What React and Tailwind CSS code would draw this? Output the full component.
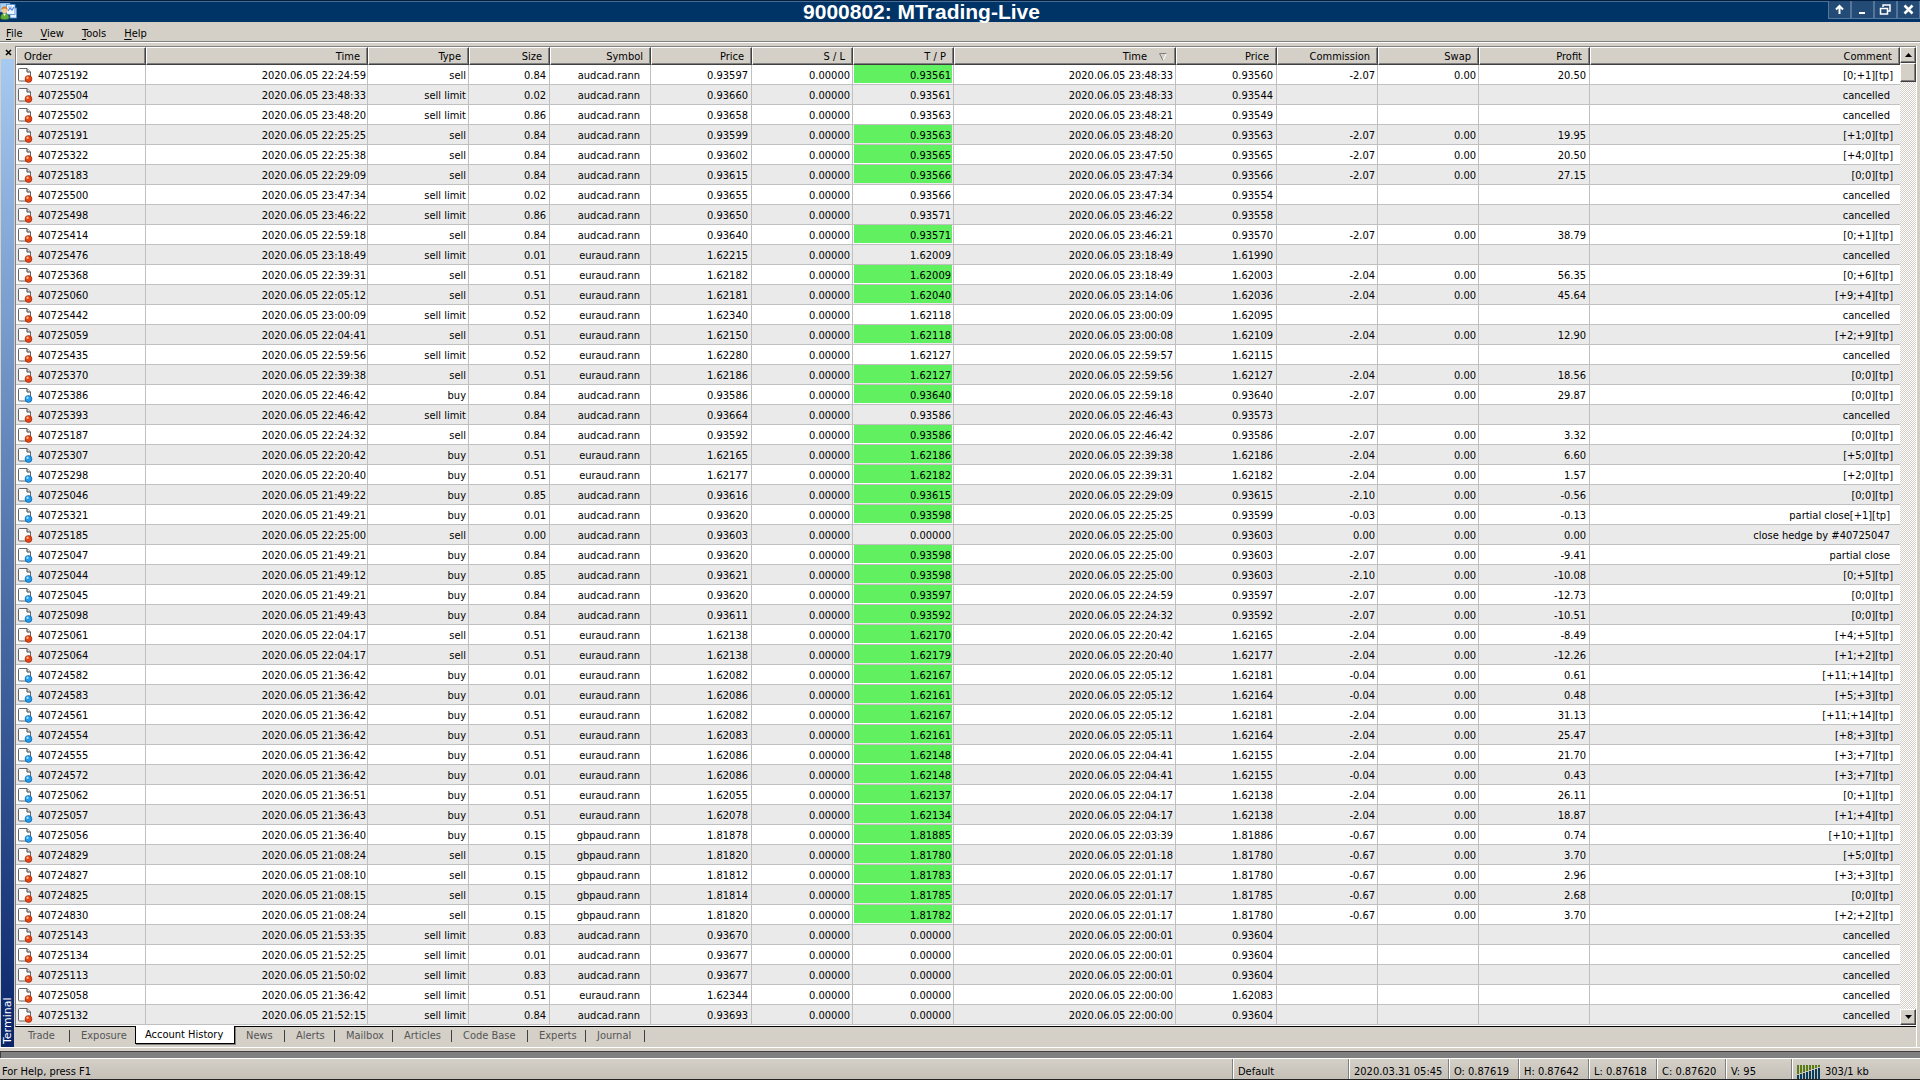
import { useState } from 'react';

const DAY = '2020.06.05';

// ticket | open time | type | size | symbol | price | t/p | close time | price | commission | swap | profit | comment
const HISTORY = `
40725192|22:24:59|sell|0.84|audcad|0.93597|0.93561|23:48:33|0.93560|-2.07|0.00|20.50|[0;+1][tp]
40725504|23:48:33|sell limit|0.02|audcad|0.93660|0.93561|23:48:33|0.93544||||cancelled
40725502|23:48:20|sell limit|0.86|audcad|0.93658|0.93563|23:48:21|0.93549||||cancelled
40725191|22:25:25|sell|0.84|audcad|0.93599|0.93563|23:48:20|0.93563|-2.07|0.00|19.95|[+1;0][tp]
40725322|22:25:38|sell|0.84|audcad|0.93602|0.93565|23:47:50|0.93565|-2.07|0.00|20.50|[+4;0][tp]
40725183|22:29:09|sell|0.84|audcad|0.93615|0.93566|23:47:34|0.93566|-2.07|0.00|27.15|[0;0][tp]
40725500|23:47:34|sell limit|0.02|audcad|0.93655|0.93566|23:47:34|0.93554||||cancelled
40725498|23:46:22|sell limit|0.86|audcad|0.93650|0.93571|23:46:22|0.93558||||cancelled
40725414|22:59:18|sell|0.84|audcad|0.93640|0.93571|23:46:21|0.93570|-2.07|0.00|38.79|[0;+1][tp]
40725476|23:18:49|sell limit|0.01|euraud|1.62215|1.62009|23:18:49|1.61990||||cancelled
40725368|22:39:31|sell|0.51|euraud|1.62182|1.62009|23:18:49|1.62003|-2.04|0.00|56.35|[0;+6][tp]
40725060|22:05:12|sell|0.51|euraud|1.62181|1.62040|23:14:06|1.62036|-2.04|0.00|45.64|[+9;+4][tp]
40725442|23:00:09|sell limit|0.52|euraud|1.62340|1.62118|23:00:09|1.62095||||cancelled
40725059|22:04:41|sell|0.51|euraud|1.62150|1.62118|23:00:08|1.62109|-2.04|0.00|12.90|[+2;+9][tp]
40725435|22:59:56|sell limit|0.52|euraud|1.62280|1.62127|22:59:57|1.62115||||cancelled
40725370|22:39:38|sell|0.51|euraud|1.62186|1.62127|22:59:56|1.62127|-2.04|0.00|18.56|[0;0][tp]
40725386|22:46:42|buy|0.84|audcad|0.93586|0.93640|22:59:18|0.93640|-2.07|0.00|29.87|[0;0][tp]
40725393|22:46:42|sell limit|0.84|audcad|0.93664|0.93586|22:46:43|0.93573||||cancelled
40725187|22:24:32|sell|0.84|audcad|0.93592|0.93586|22:46:42|0.93586|-2.07|0.00|3.32|[0;0][tp]
40725307|22:20:42|buy|0.51|euraud|1.62165|1.62186|22:39:38|1.62186|-2.04|0.00|6.60|[+5;0][tp]
40725298|22:20:40|buy|0.51|euraud|1.62177|1.62182|22:39:31|1.62182|-2.04|0.00|1.57|[+2;0][tp]
40725046|21:49:22|buy|0.85|audcad|0.93616|0.93615|22:29:09|0.93615|-2.10|0.00|-0.56|[0;0][tp]
40725321|21:49:21|buy|0.01|audcad|0.93620|0.93598|22:25:25|0.93599|-0.03|0.00|-0.13|partial close[+1][tp]
40725185|22:25:00|sell|0.00|audcad|0.93603|0.00000|22:25:00|0.93603|0.00|0.00|0.00|close hedge by #40725047
40725047|21:49:21|buy|0.84|audcad|0.93620|0.93598|22:25:00|0.93603|-2.07|0.00|-9.41|partial close
40725044|21:49:12|buy|0.85|audcad|0.93621|0.93598|22:25:00|0.93603|-2.10|0.00|-10.08|[0;+5][tp]
40725045|21:49:21|buy|0.84|audcad|0.93620|0.93597|22:24:59|0.93597|-2.07|0.00|-12.73|[0;0][tp]
40725098|21:49:43|buy|0.84|audcad|0.93611|0.93592|22:24:32|0.93592|-2.07|0.00|-10.51|[0;0][tp]
40725061|22:04:17|sell|0.51|euraud|1.62138|1.62170|22:20:42|1.62165|-2.04|0.00|-8.49|[+4;+5][tp]
40725064|22:04:17|sell|0.51|euraud|1.62138|1.62179|22:20:40|1.62177|-2.04|0.00|-12.26|[+1;+2][tp]
40724582|21:36:42|buy|0.01|euraud|1.62082|1.62167|22:05:12|1.62181|-0.04|0.00|0.61|[+11;+14][tp]
40724583|21:36:42|buy|0.01|euraud|1.62086|1.62161|22:05:12|1.62164|-0.04|0.00|0.48|[+5;+3][tp]
40724561|21:36:42|buy|0.51|euraud|1.62082|1.62167|22:05:12|1.62181|-2.04|0.00|31.13|[+11;+14][tp]
40724554|21:36:42|buy|0.51|euraud|1.62083|1.62161|22:05:11|1.62164|-2.04|0.00|25.47|[+8;+3][tp]
40724555|21:36:42|buy|0.51|euraud|1.62086|1.62148|22:04:41|1.62155|-2.04|0.00|21.70|[+3;+7][tp]
40724572|21:36:42|buy|0.01|euraud|1.62086|1.62148|22:04:41|1.62155|-0.04|0.00|0.43|[+3;+7][tp]
40725062|21:36:51|buy|0.51|euraud|1.62055|1.62137|22:04:17|1.62138|-2.04|0.00|26.11|[0;+1][tp]
40725057|21:36:43|buy|0.51|euraud|1.62078|1.62134|22:04:17|1.62138|-2.04|0.00|18.87|[+1;+4][tp]
40725056|21:36:40|buy|0.15|gbpaud|1.81878|1.81885|22:03:39|1.81886|-0.67|0.00|0.74|[+10;+1][tp]
40724829|21:08:24|sell|0.15|gbpaud|1.81820|1.81780|22:01:18|1.81780|-0.67|0.00|3.70|[+5;0][tp]
40724827|21:08:10|sell|0.15|gbpaud|1.81812|1.81783|22:01:17|1.81780|-0.67|0.00|2.96|[+3;+3][tp]
40724825|21:08:15|sell|0.15|gbpaud|1.81814|1.81785|22:01:17|1.81785|-0.67|0.00|2.68|[0;0][tp]
40724830|21:08:24|sell|0.15|gbpaud|1.81820|1.81782|22:01:17|1.81780|-0.67|0.00|3.70|[+2;+2][tp]
40725143|21:53:35|sell limit|0.83|audcad|0.93670|0.00000|22:00:01|0.93604||||cancelled
40725134|21:52:25|sell limit|0.01|audcad|0.93677|0.00000|22:00:01|0.93604||||cancelled
40725113|21:50:02|sell limit|0.83|audcad|0.93677|0.00000|22:00:01|0.93604||||cancelled
40725058|21:36:42|sell limit|0.51|euraud|1.62344|0.00000|22:00:00|1.62083||||cancelled
40725132|21:52:15|sell limit|0.84|audcad|0.93693|0.00000|22:00:00|0.93604||||cancelled
`;

const orders = HISTORY.trim().split('\n').map((line) => {
  const [ticket, openTime, type, size, pair, price, tp, closeTime, closePrice, commission, swap, profit, comment] =
    line.split('|');
  return { ticket, openTime, type, size, symbol: `${pair}.rann`, price, tp, closeTime, closePrice, commission, swap, profit, comment };
});

const columns = [
  { label: 'Order', width: 'w-[130px]' },
  { label: 'Time', width: 'w-[222px]' },
  { label: 'Type', width: 'w-[101px]' },
  { label: 'Size', width: 'w-[81px]' },
  { label: 'Symbol', width: 'w-[101px]' },
  { label: 'Price', width: 'w-[101px]' },
  { label: 'S / L', width: 'w-[101px]' },
  { label: 'T / P', width: 'w-[101px]' },
  { label: 'Time', width: 'w-[222px]', sorted: true },
  { label: 'Price', width: 'w-[101px]' },
  { label: 'Commission', width: 'w-[101px]' },
  { label: 'Swap', width: 'w-[101px]' },
  { label: 'Profit', width: 'w-[111px]' },
  { label: 'Comment', width: '' },
];

const tabs = [
  { name: 'Trade', width: 'w-[53px]' },
  { name: 'Exposure', width: 'w-[65px]' },
  { name: 'Account History', width: 'w-[100px]' },
  { name: 'News', width: 'w-[50px]' },
  { name: 'Alerts', width: 'w-[50px]' },
  { name: 'Mailbox', width: 'w-[58px]' },
  { name: 'Articles', width: 'w-[59px]' },
  { name: 'Code Base', width: 'w-[76px]' },
  { name: 'Experts', width: 'w-[58px]' },
  { name: 'Journal', width: 'w-[59px]' },
];

const AppIcon = () => (
  <svg width="17" height="17" viewBox="0 0 17 17" className="block">
    <rect x="0" y="0" width="10" height="9" fill="#a9cdf0" stroke="#5b93cf" strokeWidth="0.6" />
    <rect x="10" y="5" width="6.5" height="10" fill="#e4f1fd" stroke="#4d8ccc" strokeWidth="0.8" />
    <rect x="6.5" y="1.5" width="8.5" height="10" fill="#e9f4ff" stroke="#4d8ccc" strokeWidth="0.8" />
    <path d="M8 8l2-3 2 2 2-3" fill="none" stroke="#5a86e0" strokeWidth="1.2" />
    <path d="M8 4h4" stroke="#8fb5ea" />
    <path d="M0.5 15.5c0-4 1.5-5 4-5s4.5 1 4.5 5c-2 1.3-6.5 1.3-8.5 0z" fill="#63ad3a" stroke="#3d7e24" strokeWidth="0.6" />
    <path d="M3 10.5l1.5 2.5 1.5-2.5z" fill="#fff" />
    <circle cx="4.5" cy="7.5" r="2.8" fill="#f6c896" />
    <path d="M1.5 7.5c-.3-3 1.2-4 3-4s3.4 1 3 4c-.8-1.5-1.5-2-3-2s-2.3.6-3 2z" fill="#cf7a26" />
  </svg>
);

const OrderIcon = ({ buy }) => (
  <svg width="15" height="16" viewBox="0 0 15 16" className="block shrink-0">
    <path d="M1.5 1.5h7.5l3.5 3.5v9h-11a1 1 0 0 1-1-1v-10.500a1 1 0 0 1 1-1z" fill="#fbfbfb" stroke="#666" />
    <path d="M9 1.5v3.5h3.5" fill="#ddd" stroke="#444" />
    <circle cx="10.500" cy="12" r="3.4" fill={buy ? '#1f9df0' : '#ea4410'} stroke={buy ? '#0c62a8' : '#9c2b08'} strokeWidth="0.8" />
    <circle cx="9.500" cy="10.8" r="1.2" fill={buy ? '#9adcff' : '#ffb08c'} />
  </svg>
);

const TitleButton = ({ label, children }) => (
  <button
    aria-label={label}
    className="flex h-[18px] w-[23px] items-center justify-center border border-t-0 border-[#53779c] bg-[#234b76]"
  >
    <svg width="13" height="13" viewBox="0 0 13 13" fill="none" stroke="#fff" strokeWidth="2">
      {children}
    </svg>
  </button>
);

const ScrollButton = ({ label, path }) => (
  <button
    aria-label={label}
    className="flex h-4 w-4 items-center justify-center border border-t-white border-l-white border-r-[#404040] border-b-[#404040] bg-[#d4d0c8] shadow-[inset_-1px_-1px_0_#808080]"
  >
    <svg width="7" height="4" viewBox="0 0 7 4">
      <path d={path} fill="#000" />
    </svg>
  </button>
);

const Cell = ({ pad = 'pt-[3px] pr-[3px]', children }) => (
  <td className={`border-r border-b border-[#c0c0c0] text-right ${pad}`}>{children}</td>
);

const OrderRow = ({ order }) => {
  const filled = order.commission && order.tp !== '0.00000';
  return (
    <tr className="h-5 bg-white leading-4 even:bg-[#eaeaea]">
      <td className="border-r border-b border-[#c0c0c0] p-0">
        <div className="flex items-center gap-[5px] pl-[2px]">
          <OrderIcon buy={order.type === 'buy'} />
          <span className="pt-[3px]">{order.ticket}</span>
        </div>
      </td>
      <Cell pad="pt-[3px] pr-px">{DAY} {order.openTime}</Cell>
      <Cell pad="pt-[3px] pr-[2px]">{order.type}</Cell>
      <Cell>{order.size}</Cell>
      <Cell pad="pt-[3px] pr-[10px]">{order.symbol}</Cell>
      <Cell>{order.price}</Cell>
      <Cell pad="pt-[3px] pr-[2px]">0.00000</Cell>
      <Cell pad="px-px">
        <div className={`mb-px h-[18px] pr-px leading-[22px] ${filled ? 'bg-[#60f060]' : ''}`}>{order.tp}</div>
      </Cell>
      <Cell pad="pt-[3px] pr-[2px]">{DAY} {order.closeTime}</Cell>
      <Cell>{order.closePrice}</Cell>
      <Cell pad="pt-[3px] pr-[2px]">{order.commission}</Cell>
      <Cell pad="pt-[3px] pr-[2px]">{order.swap}</Cell>
      <Cell>{order.profit}</Cell>
      <td className={`border-b border-[#c0c0c0] pt-[3px] text-right ${order.comment.startsWith('[') ? 'pr-[7px]' : 'pr-[10px]'}`}>
        {order.comment}
      </td>
    </tr>
  );
};

const StatusCell = ({ width, children }) => (
  <div className={`flex h-5 items-end border-l border-[#808080] pl-[5px] shadow-[inset_1px_0_0_#fff] ${width}`}>
    {children}
  </div>
);

const App = () => {
  const [activeTab, setActiveTab] = useState('Account History');

  return (
    <div className="flex min-h-screen flex-col bg-[#d4d0c8] font-['DejaVu_Sans_Condensed','DejaVu_Sans',sans-serif] text-[11px] leading-[18px] whitespace-nowrap text-black">
      <header className="flex h-[22px] items-start border-t border-[#001f40] bg-[#003366] shadow-[inset_0_1px_0_#4a6d93]">
        <div className="w-4 pt-[2px]">
          <AppIcon />
        </div>
        <h1 className="flex-1 text-center font-['Liberation_Sans',sans-serif] text-[21px] leading-[22px] font-bold text-white">
          9000802: MTrading-Live
        </h1>
        <div className="flex w-[93px] justify-end">
          <TitleButton label="Keep above">
            <path d="M6.5 11V4M3 6.5L6.5 3 10 6.5" />
          </TitleButton>
          <TitleButton label="Minimize">
            <path d="M3 10h6" />
          </TitleButton>
          <TitleButton label="Restore">
            <path d="M4 4V2h7v6H9" strokeWidth="1.5" />
            <path d="M1.5 5.5h7v5.5h-7z" strokeWidth="1.5" />
          </TitleButton>
          <TitleButton label="Close">
            <path d="M2.5 2.5l8 8M10.5 2.5l-8 8" strokeWidth="2.5" />
          </TitleButton>
        </div>
      </header>

      <nav className="flex h-[20px] items-center gap-[18px] border-b border-[#808080] pt-[5px] pl-[6px] leading-[14px] shadow-[0_1px_0_#fff]">
        {['File', 'View', 'Tools', 'Help'].map((item) => (
          <button key={item}>
            <span className="underline underline-offset-2">{item[0]}</span>
            {item.slice(1)}
          </button>
        ))}
      </nav>

      <main className="mt-1 flex flex-1 border-b border-white">
        <aside className="flex w-[15px] flex-col pl-px">
          <button aria-label="Close" className="flex h-[13px] items-center justify-center">
            <svg width="7" height="7" viewBox="0 0 7 7" stroke="#000" strokeWidth="1.5">
              <path d="M1 1l5 5M6 1l-5 5" />
            </svg>
          </button>
          <div className="mr-px flex flex-1 rotate-180 items-center justify-start bg-linear-to-t from-[#a6caf0] to-[#0a246a] pt-[3px] font-['DejaVu_Sans',sans-serif] leading-[13px] text-white [writing-mode:vertical-rl]">
            Terminal
          </div>
        </aside>

        <div className="flex min-w-0 flex-1 flex-col">
          <div className="flex border-t border-b border-l border-t-[#808080] border-b-black border-l-[#808080] bg-white pb-px">
            <table className="min-w-0 flex-1 table-fixed border-separate border-spacing-0">
              <thead>
                <tr className="h-[18px]">
                  {columns.map((col, i) => (
                    <th
                      key={i}
                      className={`border-t border-r border-b border-l border-t-white border-r-[#404040] border-b-[#404040] border-l-white bg-[#d4d0c8] p-0 font-normal shadow-[inset_-1px_-1px_0_#808080] ${col.width} ${
                        i === 0 ? 'pl-[7px] text-left' : 'pr-[7px] text-right'
                      }`}
                    >
                      <span className="block h-4 leading-[18px]">
                        {col.label}
                        {col.sorted && (
                          <svg width="8" height="8" viewBox="0 0 8 8" className="mr-px ml-3 inline">
                            <path d="M7.5 0.5L4 7.5" fill="none" stroke="#fff" />
                            <path d="M4 7.5L0.5 0.5h7" fill="none" stroke="#808080" />
                          </svg>
                        )}
                      </span>
                    </th>
                  ))}
                </tr>
              </thead>
              <tbody>
                {orders.map((order) => (
                  <OrderRow key={order.ticket} order={order} />
                ))}
              </tbody>
            </table>
            <div className="flex w-4 flex-col bg-[repeating-conic-gradient(#fff_0_25%,#d4d0c8_0_50%)] bg-size-[2px_2px]">
              <ScrollButton label="Scroll up" path="M0 4h7L3.5 0z" />
              <div className="h-[19px] border border-t-white border-l-white border-r-[#404040] border-b-[#404040] bg-[#d4d0c8] shadow-[inset_-1px_-1px_0_#808080]" />
              <div className="flex-1" />
              <ScrollButton label="Scroll down" path="M0 0h7L3.5 4z" />
            </div>
          </div>

          <div role="tablist" className="flex h-5 items-start pl-[2px]">
            {tabs.map((tab, i) => {
              const active = tab.name === activeTab;
              const beforeActive = tabs[i + 1]?.name === activeTab;
              return (
                <button
                  key={tab.name}
                  role="tab"
                  aria-selected={active}
                  onClick={() => setActiveTab(tab.name)}
                  className={`text-left ${tab.width} ${
                    active
                      ? '-mt-px h-[18px] border-r border-b border-l border-black bg-white pl-[9px] shadow-[1px_1px_0_#808080]'
                      : 'flex h-[18px] items-center justify-between pl-[11px] text-[#555]'
                  }`}
                >
                  {tab.name}
                  {!active && !beforeActive && <span className="h-3 w-px bg-[#404040]" />}
                </button>
              );
            })}
          </div>
        </div>
        <div className="w-[4px] border-l border-white" />
      </main>

      <div className="mt-[3px] h-[7px] border-t border-l border-[#404040] bg-[#808080]" />

      <footer className="flex h-[24px] items-end border-t border-b-[3px] border-t-white border-b-[#222] bg-linear-to-b from-[#d4d0c8] to-[#c4c0b8] leading-[14px]">
        <div className="flex-1 pl-[2px]">For Help, press F1</div>
        <StatusCell width="w-[116px]">Default</StatusCell>
        <StatusCell width="w-[100px]">2020.03.31 05:45</StatusCell>
        <StatusCell width="w-[70px]">O: 0.87619</StatusCell>
        <StatusCell width="w-[70px]">H: 0.87642</StatusCell>
        <StatusCell width="w-[68px]">L: 0.87618</StatusCell>
        <StatusCell width="w-[69px]">C: 0.87620</StatusCell>
        <StatusCell width="w-[66px]">V: 95</StatusCell>
        <StatusCell width="w-[129px]">
          <svg width="24" height="14" viewBox="0 0 24 14" className="mr-1">
            {[3, 4, 5, 6, 7, 8, 9, 10].map((h, i) => (
              <g key={i}>
                <rect x={i * 3} y="0" width="2" height={12 - h} fill="#5a7a14" />
                <rect x={i * 3} y={13 - h} width="2" height={h + 1} fill="#0a3c5c" />
              </g>
            ))}
          </svg>
          303/1 kb
        </StatusCell>
      </footer>
    </div>
  );
};

export default App;
